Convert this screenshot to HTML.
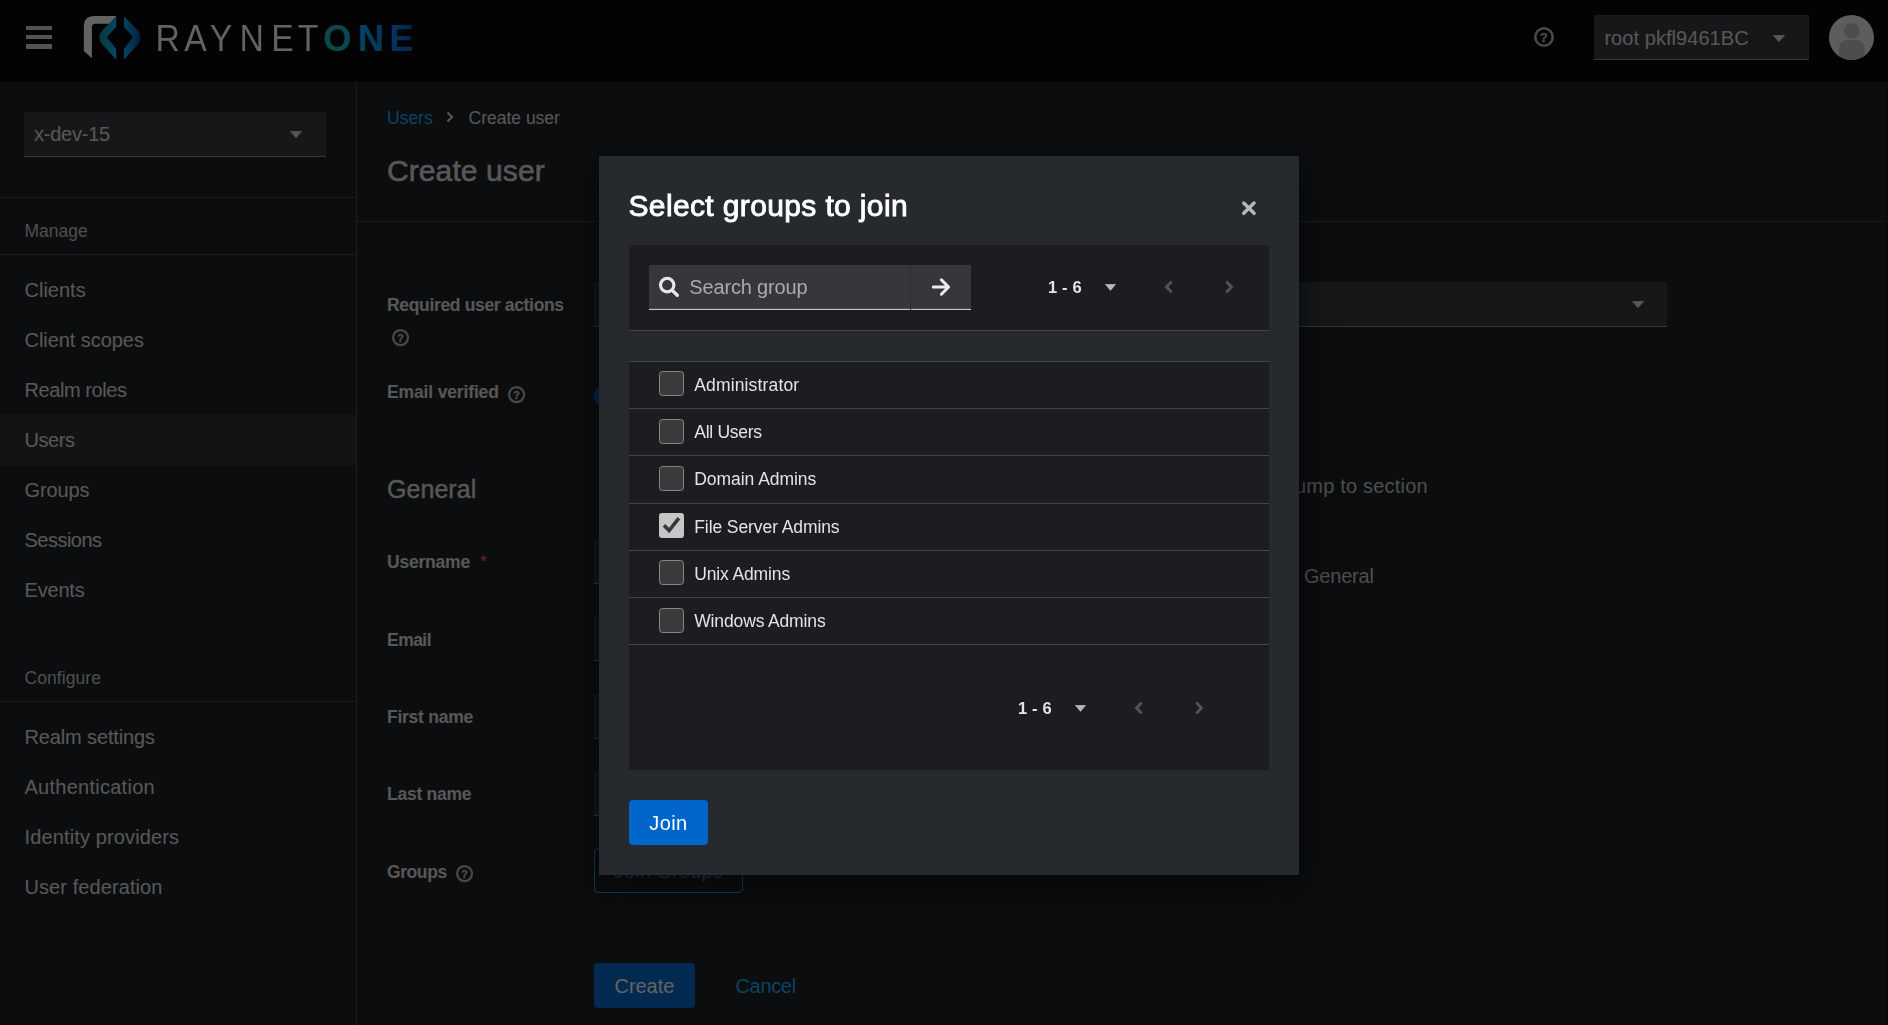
<!DOCTYPE html>
<html lang="en"><head><meta charset="utf-8"><title>Create user</title>
<style>
html,body{margin:0;padding:0}
body{width:1888px;height:1025px;overflow:hidden;position:relative;background:#1b1d21;font-family:"Liberation Sans",sans-serif}
.t{position:absolute;white-space:pre;line-height:1;display:block}
.r{position:absolute;display:block}
#page,#backdrop{position:absolute;left:0;top:0;width:1888px;height:1025px}
#backdrop{background:rgba(3,3,3,0.62)}
#modal{will-change:transform;position:absolute;left:599px;top:156px;width:700px;height:719px;background:#26292d;box-shadow:0 16px 34px 0 rgba(3,3,3,.5),0 0 10px 0 rgba(3,3,3,.35)}
</style></head><body>
<div id="page">
<div class="r" style="left:0px;top:0px;width:1888px;height:82px;background:#030303;"></div>
<div class="r" style="left:26px;top:25.5px;width:26px;height:4.5px;background:#d2d2d2;"></div>
<div class="r" style="left:26px;top:34.75px;width:26px;height:4.5px;background:#d2d2d2;"></div>
<div class="r" style="left:26px;top:44px;width:26px;height:4.5px;background:#d2d2d2;"></div>
<svg class="r" style="left:80px;top:10px" width="70" height="60" viewBox="80 10 70 60">
<defs>
<linearGradient id="g1" x1="0" x2="1" y1="0" y2="0"><stop offset="0" stop-color="#0d8e8c"/><stop offset="1" stop-color="#0bb1ff"/></linearGradient>
<linearGradient id="g2" x1="0" x2="1" y1="0" y2="0"><stop offset="0" stop-color="#0ba9ff"/><stop offset="1" stop-color="#034f9e"/></linearGradient>
</defs>
<path d="M83.85 51 V26.4 Q83.85 15.9 94.4 15.9 H116.3 L109.6 23.8 H95.4 Q91.9 23.8 91.9 27.3 V58.3 Z" fill="#ffffff"/>
<path d="M116.3 16.2 L102.2 30.5 Q96 37.3 102.2 44.5 L116.3 59.8 V49 L107.6 38.3 Q106.8 37.3 107.6 36.3 L116.3 26.7 Z" fill="url(#g1)"/>
<path d="M123.95 16.2 L138 30.5 Q142.6 37.3 138 44.5 L123.95 59.8 V49 L132.2 38.3 Q133 37.3 132.2 36.3 L123.95 26.7 Z" fill="url(#g2)"/>
</svg>
<svg class="r" style="left:150px;top:15px" width="270" height="45" viewBox="150 15 270 45"><defs>
<linearGradient id="lg" gradientUnits="userSpaceOnUse" x1="323.8" x2="411.3" y1="0" y2="0"><stop offset="0" stop-color="#1dbeb1"/><stop offset="0.305" stop-color="#15b3dd"/><stop offset="0.4" stop-color="#08b1ff"/><stop offset="0.677" stop-color="#0687e8"/><stop offset="0.787" stop-color="#0687f8"/><stop offset="1" stop-color="#035cbe"/></linearGradient>
</defs>
<text style="filter:grayscale(1)" transform="scale(0.93 1)" x="167.09 198.20 225.42 257.54 291.75 320.13" y="50.8" font-family="Liberation Sans, sans-serif" font-weight="400" font-size="36.3" fill="#ffffff" stroke="#030303" stroke-width="0.12">RAYNET</text>
<text transform="scale(1.0 1)" x="323.15 357.95 389.50" y="50.8" font-family="Liberation Sans, sans-serif" font-weight="700" font-size="36.3" fill="url(#lg)">ONE</text>
</svg>
<svg class="r" style="left:1533.00px;top:26.00px;filter:grayscale(1)" width="22" height="22" viewBox="0 0 22 22"><circle cx="11.0" cy="11.0" r="8.72" fill="none" stroke="#b8bbbe" stroke-width="2.56"/><text x="11.0" y="15.80" text-anchor="middle" font-family="Liberation Sans, sans-serif" font-weight="700" font-size="12.8" fill="#b8bbbe" stroke="#b8bbbe" stroke-width="0.4">?</text></svg>
<div class="r" style="left:1594px;top:15px;width:215px;height:45px;background:#36373a;border-bottom:1px solid #8a8d90;box-sizing:border-box"></div>
<span class="t" style="left:1604.40px;top:28px;font-size:20px;font-weight:400;color:#e0e0e0;letter-spacing:0.059px;">root pkfl9461BC</span>
<svg class="r" style="left:1773px;top:34.5px" width="12" height="7" viewBox="0 0 12 7"><path d="M0.3 0.3 H11.7 L6.0 6.8 Z" fill="#e0e0e0" stroke="#e0e0e0" stroke-width="0.6" stroke-linejoin="round"/></svg>
<svg class="r" style="left:1829px;top:15px" width="45" height="45" viewBox="0 0 36 36"><defs><clipPath id="av"><circle cx="18" cy="18" r="18"/></clipPath></defs>
<circle cx="18" cy="18" r="18" fill="#f0f0f0"/><g clip-path="url(#av)" fill="#c4c4c4"><circle cx="18.3" cy="12.6" r="6.3"/><path d="M8 36 V27 Q8 20 15 20 H21.5 Q28.5 20 28.5 27 V36 Z"/></g></svg>
<div class="r" style="left:356px;top:82px;width:1px;height:943px;background:#444548;"></div>
<div class="r" style="left:24px;top:112px;width:302px;height:45px;background:#36373a;border-bottom:1px solid #8a8d90;box-sizing:border-box"></div>
<span class="t" style="left:34.00px;top:124px;font-size:20px;font-weight:400;color:#e0e0e0;letter-spacing:-0.227px;">x-dev-15</span>
<svg class="r" style="left:290px;top:131px" width="12" height="7" viewBox="0 0 12 7"><path d="M0.3 0.3 H11.7 L6.0 6.8 Z" fill="#e0e0e0" stroke="#e0e0e0" stroke-width="0.6" stroke-linejoin="round"/></svg>
<div class="r" style="left:0px;top:197px;width:356px;height:1px;background:#444548;"></div>
<span class="t" style="left:24.50px;top:223px;font-size:17.5px;font-weight:400;color:#c6c7c8;">Manage</span>
<div class="r" style="left:0px;top:254px;width:356px;height:1px;background:#444548;"></div>
<div class="r" style="left:0px;top:415px;width:356px;height:50px;background:#2b2e33;"></div>
<span class="t" style="left:24.50px;top:280px;font-size:20px;font-weight:400;color:#e0e0e0;letter-spacing:0.008px;">Clients</span>
<span class="t" style="left:24.50px;top:330px;font-size:20px;font-weight:400;color:#e0e0e0;letter-spacing:-0.051px;">Client scopes</span>
<span class="t" style="left:24.50px;top:380px;font-size:20px;font-weight:400;color:#e0e0e0;letter-spacing:-0.428px;">Realm roles</span>
<span class="t" style="left:24.50px;top:430px;font-size:20px;font-weight:400;color:#e0e0e0;letter-spacing:-0.447px;">Users</span>
<span class="t" style="left:24.50px;top:480px;font-size:20px;font-weight:400;color:#e0e0e0;letter-spacing:-0.099px;">Groups</span>
<span class="t" style="left:24.50px;top:530px;font-size:20px;font-weight:400;color:#e0e0e0;letter-spacing:-0.520px;">Sessions</span>
<span class="t" style="left:24.50px;top:580px;font-size:20px;font-weight:400;color:#e0e0e0;letter-spacing:-0.193px;">Events</span>
<span class="t" style="left:24.50px;top:670px;font-size:17.5px;font-weight:400;color:#c6c7c8;letter-spacing:0.068px;">Configure</span>
<div class="r" style="left:0px;top:701px;width:356px;height:1px;background:#444548;"></div>
<span class="t" style="left:24.50px;top:727px;font-size:20px;font-weight:400;color:#e0e0e0;letter-spacing:-0.134px;">Realm settings</span>
<span class="t" style="left:24.50px;top:777px;font-size:20px;font-weight:400;color:#e0e0e0;letter-spacing:0.260px;">Authentication</span>
<span class="t" style="left:24.50px;top:827px;font-size:20px;font-weight:400;color:#e0e0e0;letter-spacing:0.134px;">Identity providers</span>
<span class="t" style="left:24.50px;top:877px;font-size:20px;font-weight:400;color:#e0e0e0;letter-spacing:0.083px;">User federation</span>
<span class="t" style="left:387.00px;top:110px;font-size:17.5px;font-weight:400;color:#1fa7f8;">Users</span>
<svg class="r" style="left:446px;top:111px" width="8" height="12" viewBox="0 0 8 12"><path d="M1.5 1.5 L6 6 L1.5 10.5" fill="none" stroke="#e0e0e0" stroke-width="2"/></svg>
<span class="t" style="left:468.50px;top:110px;font-size:17.5px;font-weight:400;color:#e0e0e0;">Create user</span>
<span class="t" style="left:387.00px;top:156px;font-size:30px;font-weight:400;color:#e0e0e0;letter-spacing:0.095px;-webkit-text-stroke:0.5px #e0e0e0;">Create user</span>
<div class="r" style="left:357px;top:221px;width:1528px;height:1px;background:#444548;"></div>
<div class="r" style="left:1885px;top:82px;width:3px;height:943px;background:#17191c;"></div>
<span class="t" style="left:387.00px;top:297px;font-size:17.5px;font-weight:700;color:#e0e0e0;letter-spacing:-0.336px;">Required user actions</span>
<svg class="r" style="left:391.00px;top:327.50px;filter:grayscale(1)" width="19.2" height="19.2" viewBox="0 0 19.2 19.2"><circle cx="9.6" cy="9.6" r="7.50" fill="none" stroke="#b8bbbe" stroke-width="2.20"/><text x="9.6" y="13.73" text-anchor="middle" font-family="Liberation Sans, sans-serif" font-weight="700" font-size="11.0" fill="#b8bbbe" stroke="#b8bbbe" stroke-width="0.4">?</text></svg>
<span class="t" style="left:387.00px;top:384px;font-size:17.5px;font-weight:700;color:#e0e0e0;letter-spacing:-0.147px;">Email verified</span>
<svg class="r" style="left:507.15px;top:384.80px;filter:grayscale(1)" width="19.2" height="19.2" viewBox="0 0 19.2 19.2"><circle cx="9.6" cy="9.6" r="7.50" fill="none" stroke="#b8bbbe" stroke-width="2.20"/><text x="9.6" y="13.73" text-anchor="middle" font-family="Liberation Sans, sans-serif" font-weight="700" font-size="11.0" fill="#b8bbbe" stroke="#b8bbbe" stroke-width="0.4">?</text></svg>
<span class="t" style="left:387.00px;top:477px;font-size:25px;font-weight:400;color:#e0e0e0;letter-spacing:0.042px;-webkit-text-stroke:0.3px #e0e0e0;">General</span>
<span class="t" style="left:387.00px;top:554px;font-size:17.5px;font-weight:700;color:#e0e0e0;letter-spacing:-0.205px;">Username</span>
<span class="t" style="left:480.00px;top:554px;font-size:17.5px;font-weight:400;color:#fe5142;">*</span>
<span class="t" style="left:387.00px;top:632px;font-size:17.5px;font-weight:700;color:#e0e0e0;letter-spacing:-0.541px;">Email</span>
<span class="t" style="left:387.00px;top:709px;font-size:17.5px;font-weight:700;color:#e0e0e0;letter-spacing:-0.250px;">First name</span>
<span class="t" style="left:387.00px;top:786px;font-size:17.5px;font-weight:700;color:#e0e0e0;letter-spacing:-0.257px;">Last name</span>
<span class="t" style="left:387.00px;top:864px;font-size:17.5px;font-weight:700;color:#e0e0e0;letter-spacing:-0.414px;">Groups</span>
<svg class="r" style="left:455.15px;top:864.00px;filter:grayscale(1)" width="19.2" height="19.2" viewBox="0 0 19.2 19.2"><circle cx="9.6" cy="9.6" r="7.50" fill="none" stroke="#b8bbbe" stroke-width="2.20"/><text x="9.6" y="13.73" text-anchor="middle" font-family="Liberation Sans, sans-serif" font-weight="700" font-size="11.0" fill="#b8bbbe" stroke="#b8bbbe" stroke-width="0.4">?</text></svg>
<div class="r" style="left:594px;top:282px;width:1073px;height:45px;background:#36373a;border-bottom:1px solid #8a8d90;box-sizing:border-box"></div>
<svg class="r" style="left:1631.5px;top:301.3px" width="12" height="7" viewBox="0 0 12 7"><path d="M0.3 0.3 H11.7 L6.0 6.8 Z" fill="#e0e0e0" stroke="#e0e0e0" stroke-width="0.6" stroke-linejoin="round"/></svg>
<div class="r" style="left:594px;top:384px;width:45px;height:24px;background:#0066cc;border-radius:12px"></div>
<div class="r" style="left:594px;top:539px;width:680px;height:45px;background:#36373a;border-bottom:1px solid #8a8d90;box-sizing:border-box"></div>
<div class="r" style="left:594px;top:616px;width:680px;height:45px;background:#36373a;border-bottom:1px solid #8a8d90;box-sizing:border-box"></div>
<div class="r" style="left:594px;top:694px;width:680px;height:45px;background:#36373a;border-bottom:1px solid #8a8d90;box-sizing:border-box"></div>
<div class="r" style="left:594px;top:771px;width:680px;height:45px;background:#36373a;border-bottom:1px solid #8a8d90;box-sizing:border-box"></div>
<div class="r" style="left:594px;top:848px;width:149px;height:45px;background:transparent;border:1px solid #1fa7f8;border-radius:4px;box-sizing:border-box"></div>
<span class="t" style="left:613.75px;top:861px;font-size:20px;font-weight:400;color:#1fa7f8;letter-spacing:0.128px;">Join Groups</span>
<div class="r" style="left:594px;top:963px;width:101px;height:45px;background:#0066cc;border-radius:4px"></div>
<span class="t" style="left:614.50px;top:976px;font-size:20px;font-weight:400;color:#fff;letter-spacing:-0.047px;">Create</span>
<span class="t" style="left:735.50px;top:976px;font-size:20px;font-weight:400;color:#1fa7f8;letter-spacing:-0.336px;">Cancel</span>
<span class="t" style="left:1284.80px;top:476px;font-size:20px;font-weight:400;color:#c6c7c8;letter-spacing:0.195px;">Jump to section</span>
<span class="t" style="left:1304.00px;top:566px;font-size:20px;font-weight:400;color:#c6c7c8;letter-spacing:-0.222px;">General</span>
</div>
<div id="backdrop"></div>
<div id="modal">
<span class="t" style="left:29.50px;top:35px;font-size:30px;font-weight:400;color:#ffffff;letter-spacing:0.365px;-webkit-text-stroke:0.9px #fff;">Select groups to join</span>
<svg class="r" style="left:642px;top:44px" width="16" height="16" viewBox="0 0 16 16"><path d="M2.75 3.05 L13.05 13.35 M13.05 3.05 L2.75 13.35" stroke="#b4b6b8" stroke-width="3.5" stroke-linecap="round" fill="none"/></svg>
<div class="r" style="left:30px;top:89px;width:640px;height:85px;background:#1b1d21;"></div>
<div class="r" style="left:30px;top:174px;width:640px;height:1px;background:#444548;"></div>
<div class="r" style="left:50px;top:109px;width:261px;height:45px;background:#36373a;border-bottom:1px solid #c4c6c8;box-sizing:border-box"></div>
<div class="r" style="left:50px;top:152px;width:261px;height:1px;background:#48494c;"></div>
<div class="r" style="left:311px;top:109px;width:1px;height:45px;background:#2b2d31;"></div>
<div class="r" style="left:312px;top:109px;width:60px;height:45px;background:#36373a;border-bottom:1px solid #c4c6c8;box-sizing:border-box"></div>
<div class="r" style="left:312px;top:152px;width:60px;height:1px;background:#48494c;"></div>
<svg class="r" style="left:58px;top:119px" width="24" height="24" viewBox="657 275 24 24"><circle cx="667.2" cy="285.1" r="6.7" fill="none" stroke="#e6e6e6" stroke-width="3.2"/><path d="M672.3 290.6 L677.3 295.3" stroke="#e6e6e6" stroke-width="3.4" stroke-linecap="round"/></svg>
<span class="t" style="left:90.25px;top:121px;font-size:20px;font-weight:400;color:#a9abad;letter-spacing:-0.152px;">Search group</span>
<svg class="r" style="left:330px;top:119px" width="24" height="24" viewBox="929 275 24 24"><path d="M933.3 287 H948.2 M941.4 279.9 L948.6 287 L941.4 294.2" fill="none" stroke="#ececec" stroke-width="3" stroke-linecap="round" stroke-linejoin="round"/></svg>
<span class="t" style="left:449.00px;top:123px;font-size:16.5px;font-weight:700;color:#e4e4e4;letter-spacing:0.154px;">1 - 6</span><svg class="r" style="left:506.4000000000001px;top:128.10000000000002px" width="11" height="6.6" viewBox="0 0 11 6.6"><path d="M0.3 0.3 H10.7 L5.5 6.3999999999999995 Z" fill="#b8b9ba" stroke="#b8b9ba" stroke-width="0.6" stroke-linejoin="round"/></svg><svg class="r" style="left:564.5px;top:124px" width="10" height="14" viewBox="0 0 10 14"><path d="M7.7 1.6 L2.5 6.9 L7.7 12.2" fill="none" stroke="#505358" stroke-width="2.9" stroke-linejoin="miter"/></svg><svg class="r" style="left:624.5px;top:124px" width="10" height="14" viewBox="0 0 10 14"><path d="M2.3 1.6 L7.5 6.9 L2.3 12.2" fill="none" stroke="#505358" stroke-width="2.9" stroke-linejoin="miter"/></svg>
<div class="r" style="left:30px;top:205px;width:640px;height:409px;background:#1b1d21;"></div>
<div class="r" style="left:30px;top:205px;width:640px;height:1px;background:#444548;"></div>
<div class="r" style="left:60px;top:215px;width:25px;height:25px;background:#3b3b3c;border-radius:3.5px;box-sizing:border-box;border:1px solid #858687"></div>
<span class="t" style="left:95.25px;top:221px;font-size:17.5px;font-weight:400;color:#e4e4e4;letter-spacing:0.147px;">Administrator</span>
<div class="r" style="left:30px;top:252px;width:640px;height:1px;background:#444548;"></div>
<div class="r" style="left:60px;top:263px;width:25px;height:25px;background:#3b3b3c;border-radius:3.5px;box-sizing:border-box;border:1px solid #858687"></div>
<span class="t" style="left:95.25px;top:268px;font-size:17.5px;font-weight:400;color:#e4e4e4;letter-spacing:-0.280px;">All Users</span>
<div class="r" style="left:30px;top:299px;width:640px;height:1px;background:#444548;"></div>
<div class="r" style="left:60px;top:310px;width:25px;height:25px;background:#3b3b3c;border-radius:3.5px;box-sizing:border-box;border:1px solid #858687"></div>
<span class="t" style="left:95.25px;top:315px;font-size:17.5px;font-weight:400;color:#e4e4e4;letter-spacing:-0.043px;">Domain Admins</span>
<div class="r" style="left:30px;top:347px;width:640px;height:1px;background:#444548;"></div>
<div class="r" style="left:60px;top:357px;width:25px;height:25px;background:#c6c6c6;border-radius:3px"></div>
<svg class="r" style="left:60px;top:357px" width="25" height="25" viewBox="0 0 25 25"><path d="M5 12.3 L10.1 17.6 L19.9 5.1" fill="none" stroke="#383838" stroke-width="3.6"/></svg>
<span class="t" style="left:95.25px;top:363px;font-size:17.5px;font-weight:400;color:#e4e4e4;letter-spacing:-0.089px;">File Server Admins</span>
<div class="r" style="left:30px;top:394px;width:640px;height:1px;background:#444548;"></div>
<div class="r" style="left:60px;top:404px;width:25px;height:25px;background:#3b3b3c;border-radius:3.5px;box-sizing:border-box;border:1px solid #858687"></div>
<span class="t" style="left:95.25px;top:410px;font-size:17.5px;font-weight:400;color:#e4e4e4;letter-spacing:-0.138px;">Unix Admins</span>
<div class="r" style="left:30px;top:441px;width:640px;height:1px;background:#444548;"></div>
<div class="r" style="left:60px;top:452px;width:25px;height:25px;background:#3b3b3c;border-radius:3.5px;box-sizing:border-box;border:1px solid #858687"></div>
<span class="t" style="left:95.25px;top:457px;font-size:17.5px;font-weight:400;color:#e4e4e4;letter-spacing:-0.143px;">Windows Admins</span>
<div class="r" style="left:30px;top:488px;width:640px;height:1px;background:#444548;"></div>
<span class="t" style="left:419.00px;top:544px;font-size:16.5px;font-weight:700;color:#e4e4e4;letter-spacing:0.154px;">1 - 6</span><svg class="r" style="left:476.4000000000001px;top:549.1px" width="11" height="6.6" viewBox="0 0 11 6.6"><path d="M0.3 0.3 H10.7 L5.5 6.3999999999999995 Z" fill="#b8b9ba" stroke="#b8b9ba" stroke-width="0.6" stroke-linejoin="round"/></svg><svg class="r" style="left:534.5px;top:545px" width="10" height="14" viewBox="0 0 10 14"><path d="M7.7 1.6 L2.5 6.9 L7.7 12.2" fill="none" stroke="#505358" stroke-width="2.9" stroke-linejoin="miter"/></svg><svg class="r" style="left:594.5px;top:545px" width="10" height="14" viewBox="0 0 10 14"><path d="M2.3 1.6 L7.5 6.9 L2.3 12.2" fill="none" stroke="#505358" stroke-width="2.9" stroke-linejoin="miter"/></svg>
<div class="r" style="left:30px;top:644px;width:79px;height:45px;background:#0066cc;border-radius:4px"></div>
<span class="t" style="left:50.25px;top:657px;font-size:20px;font-weight:400;color:#fff;letter-spacing:0.387px;">Join</span>
</div>
</body></html>
